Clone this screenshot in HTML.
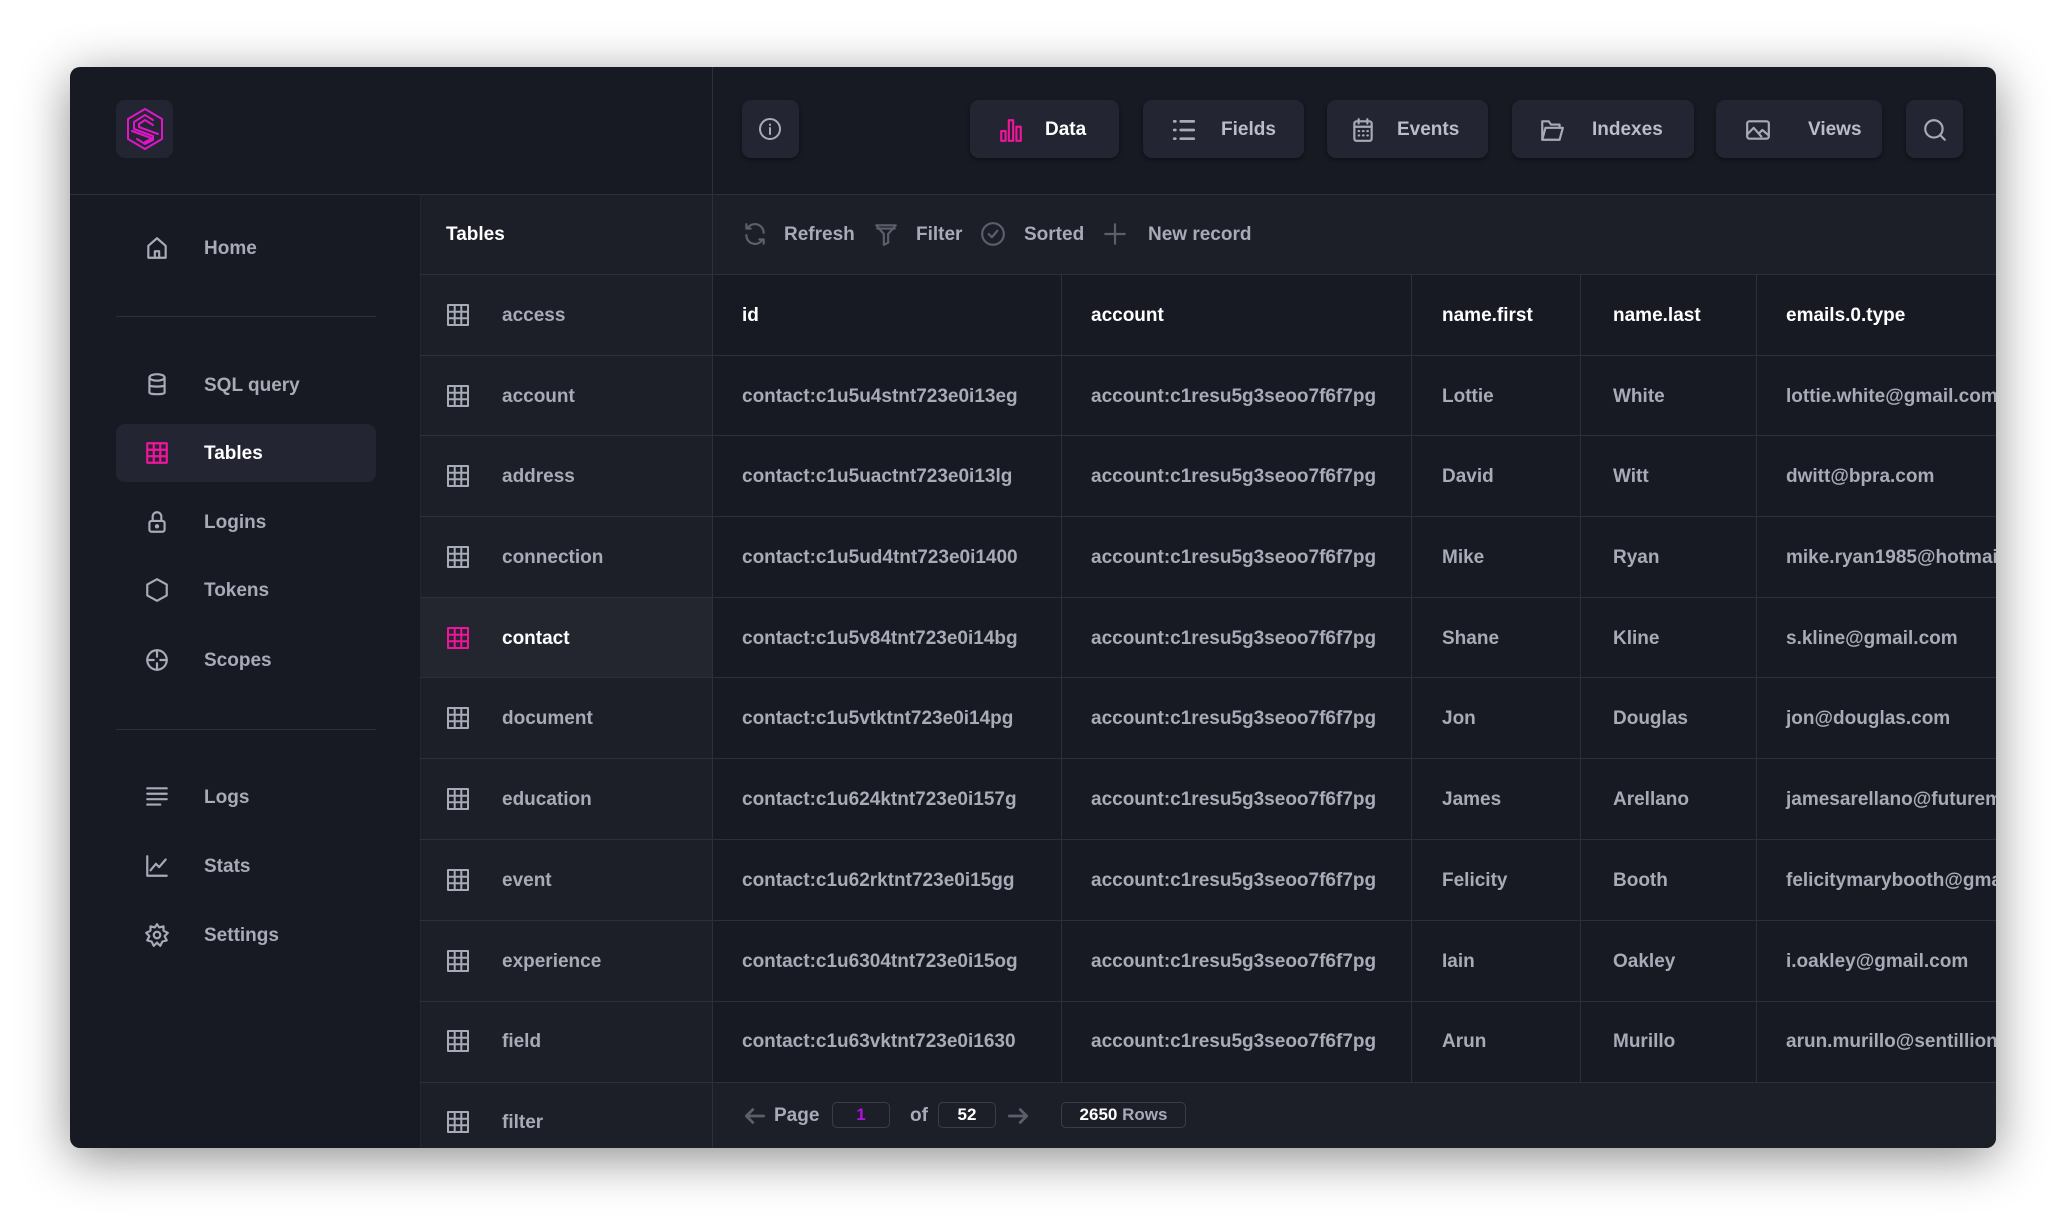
<!DOCTYPE html>
<html><head><meta charset="utf-8"><style>
*{margin:0;padding:0;box-sizing:border-box}
body{width:2067px;height:1223px;background:#fff;font-family:"Liberation Sans",sans-serif;overflow:hidden;position:relative}
.win{position:absolute;left:70px;top:67px;width:1926px;height:1081px;background:#171a22;border-radius:10px;overflow:hidden;box-shadow:0 10px 50px rgba(0,0,0,.45)}
.a{position:absolute}
.t{position:absolute;font-size:19px;font-weight:bold;color:#a7abb8;white-space:nowrap;line-height:24px;margin-top:1px}
.w{color:#fff}
.btn{position:absolute;top:33px;height:58px;background:#232632;border-radius:9px;box-shadow:0 2px 4px rgba(0,0,0,.4)}
.btn span{position:absolute;top:19px;font-size:19px;font-weight:bold;color:#b9bdc9}
.hl{position:absolute;height:1px;background:#2d303a}
.vl{position:absolute;width:1px;background:#2d303a}
svg{position:absolute;fill:none;stroke:#a7abb8;stroke-width:2;stroke-linecap:round;stroke-linejoin:round}
.box{position:absolute;height:26px;border:1px solid #3a3d48;border-radius:5px;font-size:17px;font-weight:bold;color:#fff;text-align:center;line-height:24px}
</style></head><body>
<div class="win">
<div class="a" style="left:350px;top:127px;width:292px;height:954px;background:#1c1f28"></div>
<div class="a" style="left:642px;top:127px;width:1284px;height:80px;background:#1c1f28"></div>
<div class="a" style="left:642px;top:1015px;width:1284px;height:66px;background:#1c1f28"></div>
<div class="a" style="left:350px;top:530px;width:292px;height:80px;background:#23262f"></div>
<div class="hl" style="left:0;top:127px;width:1926px"></div>
<div class="vl" style="left:642px;top:0;height:1081px"></div>
<div class="vl" style="left:350px;top:127px;height:954px;background:#23262f"></div>
<div class="hl" style="left:350px;top:207px;width:1576px"></div>
<div class="hl" style="left:350px;top:288px;width:1576px"></div>
<div class="hl" style="left:350px;top:368px;width:1576px"></div>
<div class="hl" style="left:350px;top:449px;width:1576px"></div>
<div class="hl" style="left:350px;top:530px;width:1576px"></div>
<div class="hl" style="left:350px;top:610px;width:1576px"></div>
<div class="hl" style="left:350px;top:691px;width:1576px"></div>
<div class="hl" style="left:350px;top:772px;width:1576px"></div>
<div class="hl" style="left:350px;top:853px;width:1576px"></div>
<div class="hl" style="left:350px;top:934px;width:1576px"></div>
<div class="hl" style="left:350px;top:1015px;width:1576px"></div>
<div class="vl" style="left:991px;top:207px;height:808px"></div>
<div class="vl" style="left:1341px;top:207px;height:808px"></div>
<div class="vl" style="left:1510px;top:207px;height:808px"></div>
<div class="vl" style="left:1686px;top:207px;height:808px"></div>

<div class="a" style="left:46px;top:33px;width:57px;height:58px;background:#232632;border-radius:9px"></div>
<svg style="left:52px;top:39px;stroke:#e014c8;stroke-width:2" width="46" height="46" viewBox="0 0 46 46"><path d="M23 3L40 13V33L23 43L6 33V13Z"/><path d="M31 14L23 9L12 16V23L31 30V34L23 38L15 33"/><path d="M31 19L23 14L17 18V21L36 28"/><path d="M10 25L29 32V33L23 36"/></svg>

<svg style="left:74px;top:168px" width="26" height="26" viewBox="0 0 24 24"><path d="M4 21V10L12 3L20 10V21Z"/><path d="M10 21V15H14V21"/></svg>
<div class="t" style="left:134px;top:169px">Home</div>
<div class="hl" style="left:46px;top:249px;width:260px"></div>
<svg style="left:74px;top:305px" width="26" height="26" viewBox="0 0 24 24"><ellipse cx="12" cy="5" rx="7" ry="3"/><path d="M5 5V19C5 21 19 21 19 19V5M5 12C5 14 19 14 19 12"/></svg>
<div class="t" style="left:134px;top:306px">SQL query</div>
<div class="a" style="left:46px;top:357px;width:260px;height:58px;background:#232632;border-radius:9px"></div>
<svg style="left:74px;top:373px;stroke:#f0149a" width="26" height="26" viewBox="0 0 24 24"><rect x="3" y="3" width="18" height="18"/><path d="M3 9H21M3 15H21M9 3V21M15 3V21"/></svg>
<div class="t w" style="left:134px;top:374px">Tables</div>
<svg style="left:74px;top:442px" width="26" height="26" viewBox="0 0 24 24"><rect x="5" y="11" width="14" height="10" rx="2"/><path d="M8 11V7A4 4 0 0 1 16 7V11"/><circle cx="12" cy="16" r="1"/></svg>
<div class="t" style="left:134px;top:443px">Logins</div>
<svg style="left:74px;top:510px" width="26" height="26" viewBox="0 0 24 24"><path d="M12 2L21 7V17L12 22L3 17V7Z"/></svg>
<div class="t" style="left:134px;top:511px">Tokens</div>
<svg style="left:74px;top:580px" width="26" height="26" viewBox="0 0 24 24"><circle cx="12" cy="12" r="9"/><path d="M12 3V9M12 15V21M3 12H9M15 12H21"/></svg>
<div class="t" style="left:134px;top:581px">Scopes</div>
<div class="hl" style="left:46px;top:662px;width:260px"></div>
<svg style="left:74px;top:717px" width="26" height="26" viewBox="0 0 24 24"><path d="M3 4H21M3 9H21M3 14H21M3 19H15"/></svg>
<div class="t" style="left:134px;top:718px">Logs</div>
<svg style="left:74px;top:786px" width="26" height="26" viewBox="0 0 24 24"><path d="M3 3V21H21"/><path d="M6 16L11 10L14 13L20 6"/></svg>
<div class="t" style="left:134px;top:787px">Stats</div>
<svg style="left:74px;top:855px" width="26" height="26" viewBox="0 0 24 24"><circle cx="12" cy="12" r="3"/><path d="M12 2L14 5L18 4L18 8L22 10L19 13L21 17L17 18L15 22L12 19L9 22L7 18L3 17L5 13L2 10L6 8L6 4L10 5Z"/></svg>
<div class="t" style="left:134px;top:856px">Settings</div>

<div class="btn" style="left:672px;width:57px"></div>
<svg style="left:688px;top:50px" width="24" height="24" viewBox="0 0 24 24"><circle cx="12" cy="12" r="10"/><path d="M12 11V17M12 7.5V8"/></svg>
<div class="btn" style="left:900px;width:149px"><span class="w" style="left:75px;color:#fff">Data</span></div>
<svg style="left:928px;top:50px;stroke:#f0149a" width="26" height="26" viewBox="0 0 24 24"><rect x="3" y="13" width="4" height="9"/><rect x="10" y="3" width="4" height="19"/><rect x="17" y="9" width="4" height="13"/></svg>
<div class="btn" style="left:1073px;width:161px"><span style="left:78px">Fields</span></div>
<svg style="left:1100px;top:50px;stroke-width:2.5" width="28" height="26" viewBox="0 0 24 24"><path d="M3 4H4M3 12H4M3 20H4M9 4H21M9 12H21M9 20H21"/></svg>
<div class="btn" style="left:1257px;width:161px"><span style="left:70px">Events</span></div>
<svg style="left:1280px;top:50px" width="26" height="26" viewBox="0 0 24 24"><rect x="4" y="4" width="16" height="18" rx="2"/><path d="M4 9H20M8 2V6M16 2V6M8 13H8.5M12 13H12.5M16 13H16.5M8 17H8.5M12 17H12.5M16 17H16.5"/></svg>
<div class="btn" style="left:1442px;width:182px"><span style="left:80px">Indexes</span></div>
<svg style="left:1468px;top:50px" width="28" height="26" viewBox="0 0 24 24"><path d="M3 21V4H9L11 7H19V10"/><path d="M3 21L6 10H22L19 21Z"/></svg>
<div class="btn" style="left:1646px;width:166px"><span style="left:92px">Views</span></div>
<svg style="left:1674px;top:50px" width="28" height="26" viewBox="0 0 24 24"><rect x="2" y="4" width="20" height="16" rx="2"/><path d="M2 16L8 10L15 18M13 15L16 12L22 17"/></svg>
<div class="btn" style="left:1836px;width:57px"></div>
<svg style="left:1852px;top:50px" width="26" height="26" viewBox="0 0 24 24"><circle cx="11" cy="11" r="8"/><path d="M17 17L21 21"/></svg>

<div class="t w" style="left:376px;top:155px">Tables</div>

<svg style="left:672px;top:154px;stroke:#5b5f6c" width="26" height="26" viewBox="0 0 24 24"><path d="M20 11A8 8 0 0 0 5 7M4 3V7H8M4 13A8 8 0 0 0 19 17M20 21V17H16"/></svg>
<div class="t" style="left:714px;top:155px">Refresh</div>
<svg style="left:803px;top:154px;stroke:#5b5f6c" width="26" height="26" viewBox="0 0 24 24"><path d="M3 4H21L14 12V20L10 22V12Z"/><path d="M4 7H20"/></svg>
<div class="t" style="left:846px;top:155px">Filter</div>
<svg style="left:910px;top:154px;stroke:#5b5f6c" width="26" height="26" viewBox="0 0 24 24"><circle cx="12" cy="12" r="10"/><path d="M8 12L11 15L16 9"/></svg>
<div class="t" style="left:954px;top:155px">Sorted</div>
<svg style="left:1032px;top:154px;stroke:#5b5f6c" width="26" height="26" viewBox="0 0 24 24"><path d="M12 3V21M3 12H21"/></svg>
<div class="t" style="left:1078px;top:155px">New record</div>

<div class="t w" style="left:672px;top:236px">id</div>
<div class="t w" style="left:1021px;top:236px">account</div>
<div class="t w" style="left:1372px;top:236px">name.first</div>
<div class="t w" style="left:1543px;top:236px">name.last</div>
<div class="t w" style="left:1716px;top:236px">emails.0.type</div>

<svg style="left:376px;top:236px" width="24" height="24" viewBox="0 0 24 24"><rect x="2" y="2" width="20" height="20"/><path d="M2 8.7H22M2 15.3H22M8.7 2V22M15.3 2V22"/></svg>
<div class="t" style="left:432px;top:236px">access</div>
<svg style="left:376px;top:317px" width="24" height="24" viewBox="0 0 24 24"><rect x="2" y="2" width="20" height="20"/><path d="M2 8.7H22M2 15.3H22M8.7 2V22M15.3 2V22"/></svg>
<div class="t" style="left:432px;top:317px">account</div>
<svg style="left:376px;top:397px" width="24" height="24" viewBox="0 0 24 24"><rect x="2" y="2" width="20" height="20"/><path d="M2 8.7H22M2 15.3H22M8.7 2V22M15.3 2V22"/></svg>
<div class="t" style="left:432px;top:397px">address</div>
<svg style="left:376px;top:478px" width="24" height="24" viewBox="0 0 24 24"><rect x="2" y="2" width="20" height="20"/><path d="M2 8.7H22M2 15.3H22M8.7 2V22M15.3 2V22"/></svg>
<div class="t" style="left:432px;top:478px">connection</div>
<svg style="left:376px;top:559px;stroke:#f0149a" width="24" height="24" viewBox="0 0 24 24"><rect x="2" y="2" width="20" height="20"/><path d="M2 8.7H22M2 15.3H22M8.7 2V22M15.3 2V22"/></svg>
<div class="t w" style="left:432px;top:559px">contact</div>
<svg style="left:376px;top:639px" width="24" height="24" viewBox="0 0 24 24"><rect x="2" y="2" width="20" height="20"/><path d="M2 8.7H22M2 15.3H22M8.7 2V22M15.3 2V22"/></svg>
<div class="t" style="left:432px;top:639px">document</div>
<svg style="left:376px;top:720px" width="24" height="24" viewBox="0 0 24 24"><rect x="2" y="2" width="20" height="20"/><path d="M2 8.7H22M2 15.3H22M8.7 2V22M15.3 2V22"/></svg>
<div class="t" style="left:432px;top:720px">education</div>
<svg style="left:376px;top:801px" width="24" height="24" viewBox="0 0 24 24"><rect x="2" y="2" width="20" height="20"/><path d="M2 8.7H22M2 15.3H22M8.7 2V22M15.3 2V22"/></svg>
<div class="t" style="left:432px;top:801px">event</div>
<svg style="left:376px;top:882px" width="24" height="24" viewBox="0 0 24 24"><rect x="2" y="2" width="20" height="20"/><path d="M2 8.7H22M2 15.3H22M8.7 2V22M15.3 2V22"/></svg>
<div class="t" style="left:432px;top:882px">experience</div>
<svg style="left:376px;top:962px" width="24" height="24" viewBox="0 0 24 24"><rect x="2" y="2" width="20" height="20"/><path d="M2 8.7H22M2 15.3H22M8.7 2V22M15.3 2V22"/></svg>
<div class="t" style="left:432px;top:962px">field</div>
<svg style="left:376px;top:1043px" width="24" height="24" viewBox="0 0 24 24"><rect x="2" y="2" width="20" height="20"/><path d="M2 8.7H22M2 15.3H22M8.7 2V22M15.3 2V22"/></svg>
<div class="t" style="left:432px;top:1043px">filter</div>

<div class="t" style="left:672px;top:317px">contact:c1u5u4stnt723e0i13eg</div><div class="t" style="left:1021px;top:317px">account:c1resu5g3seoo7f6f7pg</div><div class="t" style="left:1372px;top:317px">Lottie</div><div class="t" style="left:1543px;top:317px">White</div><div class="t" style="left:1716px;top:317px">lottie.white@gmail.com</div>
<div class="t" style="left:672px;top:397px">contact:c1u5uactnt723e0i13lg</div><div class="t" style="left:1021px;top:397px">account:c1resu5g3seoo7f6f7pg</div><div class="t" style="left:1372px;top:397px">David</div><div class="t" style="left:1543px;top:397px">Witt</div><div class="t" style="left:1716px;top:397px">dwitt@bpra.com</div>
<div class="t" style="left:672px;top:478px">contact:c1u5ud4tnt723e0i1400</div><div class="t" style="left:1021px;top:478px">account:c1resu5g3seoo7f6f7pg</div><div class="t" style="left:1372px;top:478px">Mike</div><div class="t" style="left:1543px;top:478px">Ryan</div><div class="t" style="left:1716px;top:478px">mike.ryan1985@hotmail.com</div>
<div class="t" style="left:672px;top:559px">contact:c1u5v84tnt723e0i14bg</div><div class="t" style="left:1021px;top:559px">account:c1resu5g3seoo7f6f7pg</div><div class="t" style="left:1372px;top:559px">Shane</div><div class="t" style="left:1543px;top:559px">Kline</div><div class="t" style="left:1716px;top:559px">s.kline@gmail.com</div>
<div class="t" style="left:672px;top:639px">contact:c1u5vtktnt723e0i14pg</div><div class="t" style="left:1021px;top:639px">account:c1resu5g3seoo7f6f7pg</div><div class="t" style="left:1372px;top:639px">Jon</div><div class="t" style="left:1543px;top:639px">Douglas</div><div class="t" style="left:1716px;top:639px">jon@douglas.com</div>
<div class="t" style="left:672px;top:720px">contact:c1u624ktnt723e0i157g</div><div class="t" style="left:1021px;top:720px">account:c1resu5g3seoo7f6f7pg</div><div class="t" style="left:1372px;top:720px">James</div><div class="t" style="left:1543px;top:720px">Arellano</div><div class="t" style="left:1716px;top:720px">jamesarellano@futuremail.com</div>
<div class="t" style="left:672px;top:801px">contact:c1u62rktnt723e0i15gg</div><div class="t" style="left:1021px;top:801px">account:c1resu5g3seoo7f6f7pg</div><div class="t" style="left:1372px;top:801px">Felicity</div><div class="t" style="left:1543px;top:801px">Booth</div><div class="t" style="left:1716px;top:801px">felicitymarybooth@gmail.com</div>
<div class="t" style="left:672px;top:882px">contact:c1u6304tnt723e0i15og</div><div class="t" style="left:1021px;top:882px">account:c1resu5g3seoo7f6f7pg</div><div class="t" style="left:1372px;top:882px">Iain</div><div class="t" style="left:1543px;top:882px">Oakley</div><div class="t" style="left:1716px;top:882px">i.oakley@gmail.com</div>
<div class="t" style="left:672px;top:962px">contact:c1u63vktnt723e0i1630</div><div class="t" style="left:1021px;top:962px">account:c1resu5g3seoo7f6f7pg</div><div class="t" style="left:1372px;top:962px">Arun</div><div class="t" style="left:1543px;top:962px">Murillo</div><div class="t" style="left:1716px;top:962px">arun.murillo@sentillion.com</div>

<svg style="left:672px;top:1036px;stroke:#5b5f6c;stroke-width:2.5" width="26" height="26" viewBox="0 0 24 24"><path d="M20 12H4M10 6L4 12L10 18"/></svg>
<div class="t" style="left:704px;top:1036px">Page</div>
<div class="box" style="left:762px;top:1035px;width:58px;color:#b012e0">1</div>
<div class="t" style="left:840px;top:1036px">of</div>
<div class="box" style="left:868px;top:1035px;width:58px">52</div>
<svg style="left:935px;top:1036px;stroke:#5b5f6c;stroke-width:2.5" width="26" height="26" viewBox="0 0 24 24"><path d="M4 12H20M14 6L20 12L14 18"/></svg>
<div class="box" style="left:991px;top:1035px;width:125px">2650 <span style="color:#a7abb8">Rows</span></div>
</div>
</body></html>
